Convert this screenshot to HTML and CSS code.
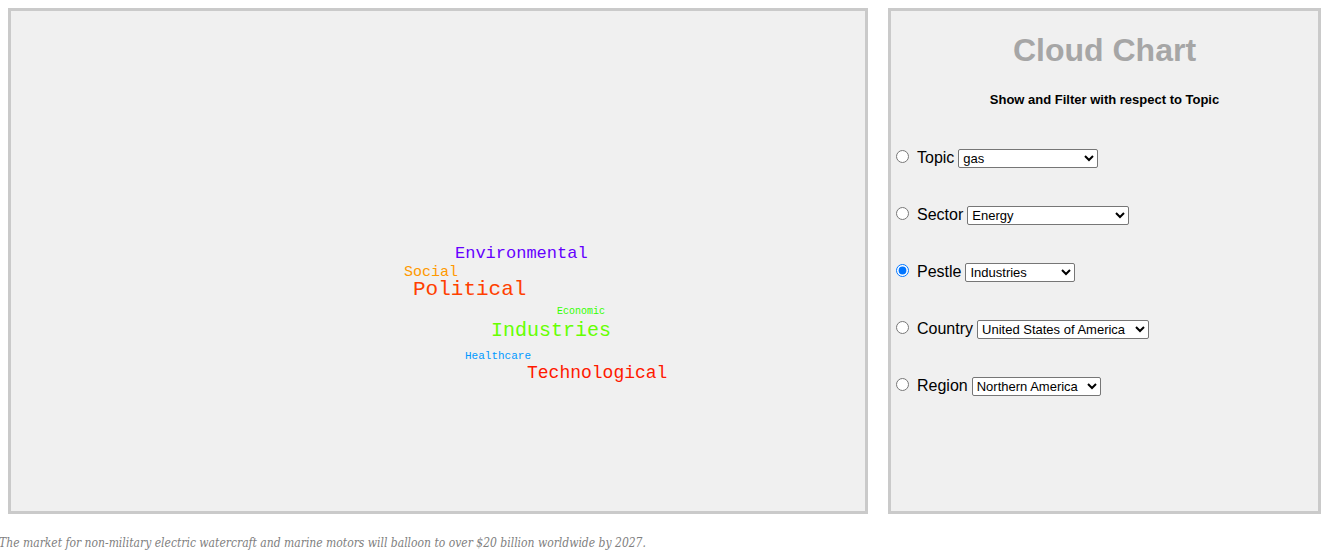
FILE: index.html
```html
<!DOCTYPE html>
<html lang="en">
<head>
<meta charset="utf-8">
<title>Cloud Chart</title>
<link rel="stylesheet" href="styles.css">
</head>
<body>
<main class="dashboard">
  <section class="panel">
    <svg class="cloud" viewBox="0 0 854 500" role="img" aria-label="Word cloud by pestle">
      <text x="444" y="247" font-size="17" fill="#6600ff">Environmental</text>
      <text x="393" y="265" font-size="15" fill="#ff9900">Social</text>
      <text x="402" y="284" font-size="21" fill="#ff4000">Political</text>
      <text x="546" y="303" font-size="10" fill="#33ff00">Economic</text>
      <text x="480" y="325" font-size="20" fill="#66ff00">Industries</text>
      <text x="454" y="348" font-size="11" fill="#0099ff">Healthcare</text>
      <text x="516" y="367" font-size="18" fill="#ff1900">Technological</text>
    </svg>
  </section>
  <form class="panel filters">
    <h1 class="title">Cloud Chart</h1>
    <h2 class="subtitle">Show and Filter with respect to Topic</h2>
    <div class="filter">
      <input class="radio" type="radio" name="filter" id="topic">
      <label for="topic">Topic</label>
      <select class="select select-topic" aria-label="Topic value"><option>gas</option></select>
    </div>
    <div class="filter">
      <input class="radio" type="radio" name="filter" id="sector">
      <label for="sector">Sector</label>
      <select class="select select-sector" aria-label="Sector value"><option>Energy</option></select>
    </div>
    <div class="filter">
      <input class="radio" type="radio" name="filter" id="pestle" checked>
      <label for="pestle">Pestle</label>
      <select class="select select-pestle" aria-label="Pestle value"><option>Industries</option></select>
    </div>
    <div class="filter">
      <input class="radio" type="radio" name="filter" id="country">
      <label for="country">Country</label>
      <select class="select select-country" aria-label="Country value"><option>United States of America</option></select>
    </div>
    <div class="filter">
      <input class="radio" type="radio" name="filter" id="region">
      <label for="region">Region</label>
      <select class="select select-region" aria-label="Region value"><option>Northern America</option></select>
    </div>
  </form>
</main>
<p class="ticker">The market for non-military electric watercraft and marine motors will balloon to over $20 billion worldwide by 2027.</p>
</body>
</html>
```
FILE: styles.css
```css
body {
  margin: 0;
  background: #fff;
  color: #000;
  font-family: "Liberation Sans", Arial, sans-serif;
  font-size: 16px;
}

.dashboard {
  display: grid;
  grid-template-columns: 860fr 433fr;
  gap: 20px;
  padding: 8px 13px 0 8px;
}

.panel {
  min-height: 500px;
  border: 3px solid #cacaca;
  background: #f0f0f0;
}

.cloud {
  display: block;
  width: 100%;
  font-family: "Liberation Mono", "Courier New", monospace;
}

.title {
  margin: 21px 0;
  color: #a6a6a6;
  font-size: 32px;
  line-height: 37px;
  text-align: center;
}

.subtitle {
  margin: 0 0 38px;
  font-size: 13px;
  line-height: 19px;
  text-align: center;
}

.filter {
  display: flex;
  align-items: center;
  height: 21px;
  margin-bottom: 36px;
  padding-left: 5px;
}

.radio {
  width: 13px;
  height: 13px;
  margin: 0 8px 2px 0;
}

.select {
  height: 19px;
  margin: 2px 0 0 4px;
  padding: 0;
  border: 1px solid #767676;
  border-radius: 2px;
  background-color: #fff;
  color: #000;
  font-family: inherit;
  font-size: 13px;
}

.select-topic { width: 140px; }
.select-sector { width: 162px; }
.select-pestle { width: 110px; }
.select-country { width: 172px; }
.select-region { width: 129px; }

.ticker {
  margin: 20px 0 0 -1px;
  color: #808080;
  font-family: "DejaVu Serif Condensed", "DejaVu Serif", serif;
  font-size: 12px;
  font-style: italic;
  line-height: 18px;
  white-space: nowrap;
}
```
